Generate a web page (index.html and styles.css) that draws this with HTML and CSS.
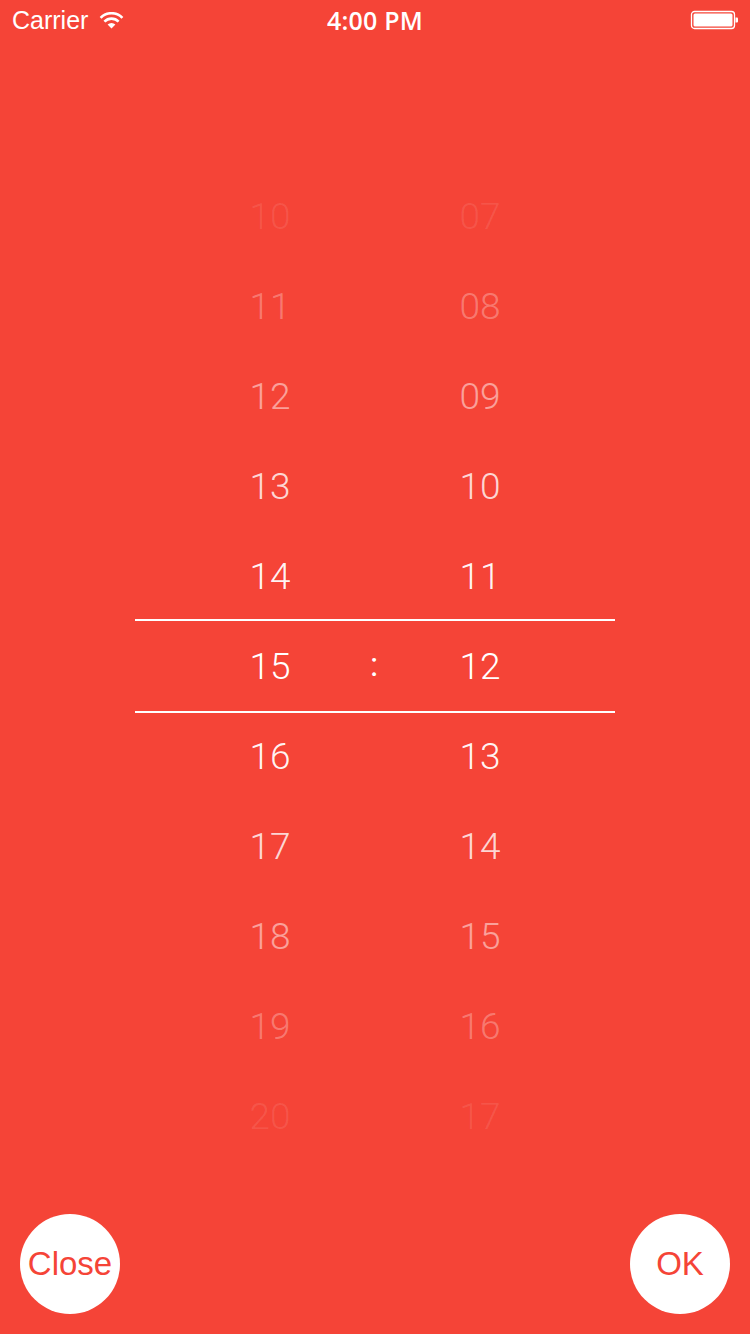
FILE: index.html
```html
<!DOCTYPE html>
<html>
<head>
<meta charset="utf-8">
<link rel="stylesheet" href="styles.css">
</head>
<body>
<div class="screen">
  <div class="status">
    <div class="status-left">
      <span class="carrier">Carrier</span>
      <svg class="wifi" width="25" height="17" viewBox="0 0 25 17">
        <path d="M12.5 16.5 L8.6 12.6 A5.6 5.6 0 0 1 16.4 12.6 Z" fill="#fff"/>
        <path d="M5.4 9.6 A10 10 0 0 1 19.6 9.6" stroke="#fff" stroke-width="2.6" fill="none"/>
        <path d="M1.6 5.8 A15.2 15.2 0 0 1 23.4 5.8" stroke="#fff" stroke-width="2.6" fill="none"/>
      </svg>
    </div>
    <div class="time">4:00 PM</div>
    <div class="status-right">
      <svg width="50" height="20" viewBox="0 0 50 20">
        <rect x="1.5" y="1.5" width="43" height="17" rx="3" fill="none" stroke="#fff" stroke-width="1.3"/>
        <rect x="3.5" y="3.5" width="39" height="13" rx="1.5" fill="#fff"/>
        <path d="M45.5 7.5 h1.5 a1 1 0 0 1 1 1 v3 a1 1 0 0 1 -1 1 h-1.5 z" fill="#fff"/>
      </svg>
    </div>
  </div>

  <div class="picker">
    <div class="row o5"><span class="h">10</span><span class="c"></span><span class="m">07</span></div>
    <div class="row o4"><span class="h">11</span><span class="c"></span><span class="m">08</span></div>
    <div class="row o3"><span class="h">12</span><span class="c"></span><span class="m">09</span></div>
    <div class="row o2"><span class="h">13</span><span class="c"></span><span class="m">10</span></div>
    <div class="row o1"><span class="h">14</span><span class="c"></span><span class="m">11</span></div>
    <div class="row sel"><span class="h">15</span><span class="c">:</span><span class="m">12</span></div>
    <div class="row o1"><span class="h">16</span><span class="c"></span><span class="m">13</span></div>
    <div class="row o2"><span class="h">17</span><span class="c"></span><span class="m">14</span></div>
    <div class="row o3"><span class="h">18</span><span class="c"></span><span class="m">15</span></div>
    <div class="row o4"><span class="h">19</span><span class="c"></span><span class="m">16</span></div>
    <div class="row o5"><span class="h">20</span><span class="c"></span><span class="m">17</span></div>
  </div>

  <div class="actions">
    <button class="btn">Close</button>
    <button class="btn">OK</button>
  </div>
</div>
</body>
</html>
```

FILE: styles.css
```css
html, body {
  margin: 0;
  padding: 0;
}
body {
  background: #f54437;
  width: 750px;
  height: 1334px;
  overflow: hidden;
  font-family: "Liberation Sans", Arial, sans-serif;
  color: #fff;
}
.screen {
  display: flex;
  flex-direction: column;
  height: 1334px;
}
.status {
  height: 40px;
  display: flex;
  align-items: center;
  justify-content: space-between;
  padding: 0 10px 0 12px;
  position: relative;
}
.status-left {
  display: flex;
  align-items: center;
  gap: 11px;
}
.carrier {
  font-size: 25px;
  font-family: "Liberation Sans", Arial, sans-serif;
}
.wifi {
  margin-top: 0;
}
.time {
  position: absolute;
  left: 0;
  right: 0;
  text-align: center;
  font-size: 25px;
  font-weight: 600;
  font-family: "Open Sans", "Liberation Sans", sans-serif;
  letter-spacing: 0.2px;
}
.status-right {
  display: flex;
  align-items: center;
  margin-top: 0;
}
.picker {
  margin: 131px 0 0 135px;
  width: 480px;
  display: flex;
  flex-direction: column;
}
.row {
  height: 90px;
  display: grid;
  grid-template-columns: 35px 200px 8px 204px 33px;
  align-items: center;
  font-family: Roboto, "Liberation Sans", sans-serif;
  font-size: 37px;
  font-weight: 300;
}
.row .h { grid-column: 2; text-align: center; }
.row .c { grid-column: 3; text-align: center; }
.row .m { grid-column: 4; text-align: center; }
.row.sel {
  border-top: 2px solid #fff;
  border-bottom: 2px solid #fff;
  margin: -2px 0;
}
.row.sel .c { font-size: 34px; margin-top: -4px; font-weight: 400; }
.o1 { color: rgba(255,255,255,0.96); }
.o2 { color: rgba(255,255,255,0.8); }
.o3 { color: rgba(255,255,255,0.5); }
.o4 { color: rgba(255,255,255,0.3); }
.o5 { color: rgba(255,255,255,0.1); }
.actions {
  margin-top: auto;
  padding: 0 20px 20px 20px;
  display: flex;
  justify-content: space-between;
}
.btn {
  width: 100px;
  height: 100px;
  border-radius: 50%;
  border: none;
  background: #fff;
  color: #f54437;
  font-family: "Liberation Sans", Arial, sans-serif;
  font-size: 33px;
  padding: 0;
  display: flex;
  align-items: center;
  justify-content: center;
}
```
